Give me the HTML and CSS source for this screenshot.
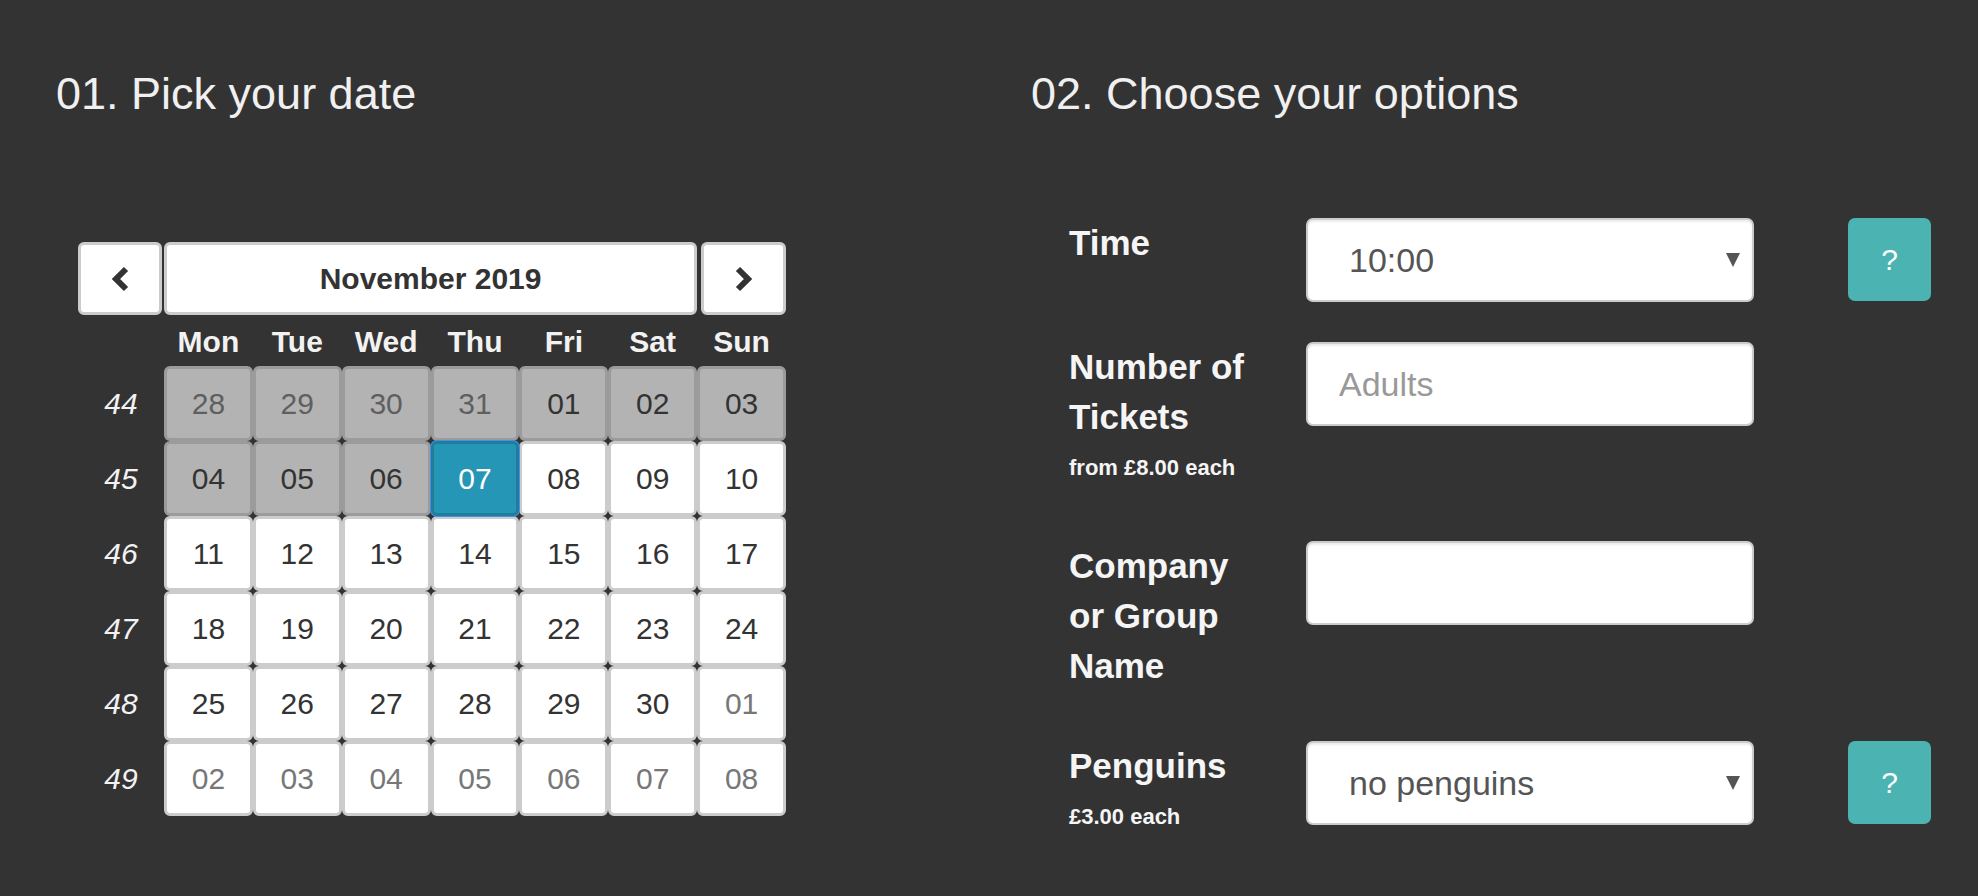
FILE: index.html
```html
<!DOCTYPE html>
<html lang="en">
<head>
<meta charset="utf-8">
<title>Booking</title>
<link rel="stylesheet" href="styles.css">
</head>
<body>
<div class="page">
  <section class="col col-date">
    <h2 class="title">01. Pick your date</h2>
    <div class="cal">
      <button class="nav prev" aria-label="Previous month">
        <svg width="20" height="28" viewBox="0 0 20 28"><polyline points="16,4 6,14 16,24" fill="none" stroke="#333" stroke-width="6"/></svg>
      </button>
      <div class="month">November 2019</div>
      <button class="nav next" aria-label="Next month">
        <svg width="20" height="28" viewBox="0 0 20 28"><polyline points="4,4 14,14 4,24" fill="none" stroke="#333" stroke-width="6"/></svg>
      </button>

      <div class="dn-spacer"></div>
      <div class="dn">Mon</div><div class="dn">Tue</div><div class="dn">Wed</div><div class="dn">Thu</div><div class="dn">Fri</div><div class="dn">Sat</div><div class="dn">Sun</div>

      <div class="wk">44</div>
      <div class="day off other">28</div><div class="day off other">29</div><div class="day off other">30</div><div class="day off other">31</div><div class="day off">01</div><div class="day off">02</div><div class="day off">03</div>

      <div class="wk">45</div>
      <div class="day off">04</div><div class="day off">05</div><div class="day off">06</div><div class="day sel">07</div><div class="day">08</div><div class="day">09</div><div class="day">10</div>

      <div class="wk">46</div>
      <div class="day">11</div><div class="day">12</div><div class="day">13</div><div class="day">14</div><div class="day">15</div><div class="day">16</div><div class="day">17</div>

      <div class="wk">47</div>
      <div class="day">18</div><div class="day">19</div><div class="day">20</div><div class="day">21</div><div class="day">22</div><div class="day">23</div><div class="day">24</div>

      <div class="wk">48</div>
      <div class="day">25</div><div class="day">26</div><div class="day">27</div><div class="day">28</div><div class="day">29</div><div class="day">30</div><div class="day other">01</div>

      <div class="wk">49</div>
      <div class="day other">02</div><div class="day other">03</div><div class="day other">04</div><div class="day other">05</div><div class="day other">06</div><div class="day other">07</div><div class="day other">08</div>
    </div>
  </section>

  <section class="col col-opts">
    <h2 class="title">02. Choose your options</h2>
    <div class="form">
      <div class="row">
        <div class="lab"><div class="label">Time</div></div>
        <div class="field select-wrap">
          <select class="input select"><option>10:00</option></select>
        </div>
        <button class="help">?</button>
      </div>

      <div class="row">
        <div class="lab">
          <div class="label">Number of Tickets</div>
          <div class="note">from £8.00 each</div>
        </div>
        <div class="field">
          <input class="input text" type="text" placeholder="Adults">
        </div>
      </div>

      <div class="row">
        <div class="lab"><div class="label">Company or Group Name</div></div>
        <div class="field">
          <input class="input text" type="text">
        </div>
      </div>

      <div class="row last">
        <div class="lab">
          <div class="label">Penguins</div>
          <div class="note">£3.00 each</div>
        </div>
        <div class="field select-wrap">
          <select class="input select"><option>no penguins</option></select>
        </div>
        <button class="help">?</button>
      </div>
    </div>
  </section>
</div>
</body>
</html>
```

FILE: styles.css
```css
* { box-sizing: border-box; }

html, body {
  margin: 0;
  padding: 0;
  background: #333333;
}

body {
  font-family: "Liberation Sans", Arial, sans-serif;
  color: #f2f2f2;
  overflow: hidden;
}

.page {
  display: grid;
  grid-template-columns: 975px 1fr;
  padding: 68px 0 0 56px;
}

.title {
  margin: 0;
  font-size: 45px;
  font-weight: normal;
  line-height: 52px;
  color: #f0f0f0;
}

/* ---------- calendar ---------- */
.cal {
  margin: 122px 0 0 22px;
  width: 708px;
  display: grid;
  grid-template-columns: 86px repeat(7, 1fr);
  grid-auto-rows: 75px;
  grid-template-rows: 73px 51px;
}

.nav, .month {
  background: #fff;
  border: 3px solid #ccc;
  border-radius: 6px;
  height: 73px;
  padding: 0;
  display: flex;
  align-items: center;
  justify-content: center;
}

.prev { margin-right: 2px; }
.next { margin-left: 4px; }

.month {
  grid-column: 2 / span 6;
  font-size: 30px;
  font-weight: bold;
  color: #333;
}

.dn {
  font-size: 30px;
  font-weight: bold;
  color: #f2f2f2;
  text-align: center;
  line-height: 48px;
  padding-top: 3px;
}

.wk {
  font-size: 30px;
  font-style: italic;
  color: #f2f2f2;
  display: flex;
  align-items: center;
  justify-content: center;
}

.day {
  background: #fff;
  border: 3px solid #ccc;
  border-radius: 6px;
  display: flex;
  align-items: center;
  justify-content: center;
  font-size: 30px;
  color: #333;
}

.day.other { color: #777; }

.day.off {
  background: #b3b3b3;
  border-color: #9b9b9b;
  color: #333;
}

.day.off.other { color: #5f5f5f; }

.day.sel {
  background: #2696b6;
  border-color: #1f7e9a;
  color: #fff;
  box-shadow: 0 0 0 1px #4a8de8;
  position: relative;
}

/* ---------- form ---------- */
.form {
  margin: 98px 0 0 38px;
}

.row {
  display: flex;
  align-items: flex-start;
  margin-bottom: 40px;
}

.row.last { margin-bottom: 0; }

.lab {
  width: 237px;
  flex: none;
}

.label {
  font-size: 35px;
  font-weight: bold;
  line-height: 50px;
  color: #f5f5f5;
  width: 178px;
  margin-bottom: 10px;
}

.note {
  font-size: 22px;
  font-weight: bold;
  line-height: 32px;
  color: #f5f5f5;
  margin-top: 1px;
  margin-bottom: 17px;
  white-space: nowrap;
}

.row.last .note { margin-bottom: 0; }

.field {
  width: 448px;
  flex: none;
}

.select-wrap { position: relative; }

.select-wrap::after {
  content: "";
  position: absolute;
  right: 14px;
  top: 35px;
  border-left: 7.5px solid transparent;
  border-right: 7.5px solid transparent;
  border-top: 14px solid #555;
  pointer-events: none;
}

.input {
  display: block;
  width: 448px;
  height: 84px;
  margin: 0;
  background: #fff;
  border: 2px solid #ccc;
  border-radius: 7px;
  box-shadow: inset 0 2px 2px rgba(0, 0, 0, 0.08);
  font-family: "Liberation Sans", Arial, sans-serif;
  font-size: 34px;
  color: #555;
  outline: none;
}

.select {
  appearance: none;
  -webkit-appearance: none;
  padding: 0 40px 0 41px;
}

.text { padding: 0 31px; }

.text::placeholder { color: #999; }

.help {
  flex: none;
  margin-left: 94px;
  width: 83px;
  height: 83px;
  border: none;
  border-radius: 7px;
  background: #4bb3b1;
  color: #fff;
  font-family: "Liberation Sans", Arial, sans-serif;
  font-size: 30px;
  padding: 0;
}
```
